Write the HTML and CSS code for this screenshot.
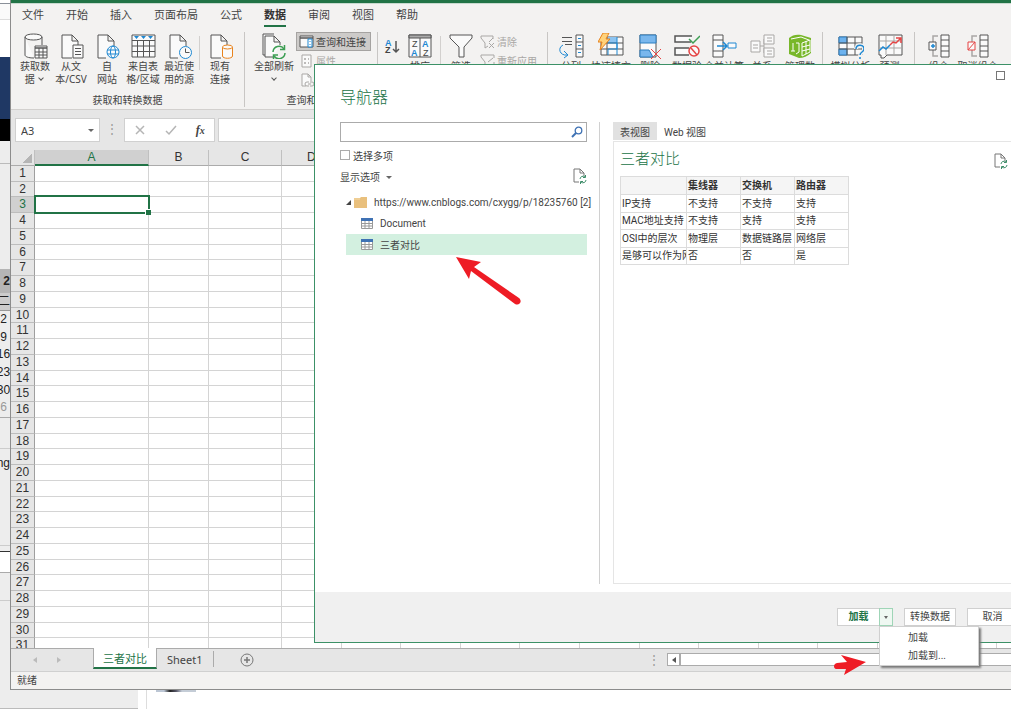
FILE: index.html
```html
<!DOCTYPE html>
<html lang="zh-CN">
<head>
<meta charset="utf-8">
<title>三者对比 - Excel</title>
<link rel="stylesheet" href="styles.css">
</head>
<body>
<div class="desktop">
  <div class="back-side" aria-hidden="true">
    <div class="back-strip">
      <span class="s s-top"></span><span class="s s-bar"></span><span class="s s-white"></span>
      <span class="s s-navy"></span><span class="s s-black"></span><span class="s s-gap"></span><span class="s s-long"></span>
      <span class="s s-month">2</span><span class="s s-week">二</span>
      <span class="s s-days"><i>2</i><i>9</i><i>16</i><i>23</i><i>30</i><i class="dim">6</i></span>
      <span class="s s-foot"></span><span class="s s-ng">ng</span><span class="s s-field"></span><span class="s s-after"></span>
    </div>
  </div>
  <div class="back-page" aria-hidden="true"><span class="back-blur"></span></div>

  <main class="excel">
    <div class="titlebar"></div>
    <nav class="tabs">
      <button>文件</button><button>开始</button><button>插入</button><button>页面布局</button><button>公式</button><button class="on">数据</button><button>审阅</button><button>视图</button><button>帮助</button>
    </nav>
    <div class="ribbon">
      <section class="group">
        <div class="tools">
          <button class="tool"><svg viewBox="0 0 26 26"><path d="M3 4v18c0 1.500 3 3 9 3M20 4v8M3 4c0-4 17-4 17 0s-17 4-17 0" class="k w"/><path d="M13 13h12v12H13z" class="k w"/><path d="M13 15h12" class="k t"/><path d="M13 19h12M13 22h12M17 15v10M21 15v10" class="k"/></svg><span>获取数<br>据 <em class="chev"></em></span></button>
          <button class="tool"><svg viewBox="0 0 26 26"><path d="M14 25H4V2h10l6 6v4M14 2v6h6" class="k w"/><path d="M15 12h10v13H15z" class="k w"/><path d="M17 15.500h6M17 18.500h6M17 21.500h6" class="k"/></svg><span>从文<br>本/CSV</span></button>
          <button class="tool"><svg viewBox="0 0 26 26"><path d="M12 25H4V2h10l6 6v5M14 2v6h6" class="k w"/><circle cx="19" cy="19" r="6" class="b w"/><ellipse cx="19" cy="19" rx="2.500" ry="6" class="b"/><path d="M13 17h12M13 21h12" class="b"/></svg><span>自<br>网站</span></button>
          <button class="tool"><svg viewBox="0 0 26 26"><path d="M2 2h23v22H2z" class="k w"/><path d="M2 7.500h23M2 13h23M2 18.500h23M7.500 7v17M13.500 7v17M19.500 7v17" class="k"/><path d="M4 3h5L6.500 6zM11 3h5l-2.500 3zM18 3h5l-2.500 3z" fill="#1e88d2"/></svg><span>来自表<br>格/区域</span></button>
          <button class="tool"><svg viewBox="0 0 26 26"><path d="M12 25H4V2h10l6 6v5M14 2v6h6" class="k w"/><circle cx="19.500" cy="19.500" r="6" class="b w"/><path d="M19.500 15.500v4h4" class="k"/></svg><span>最近使<br>用的源</span></button>
          <i class="short"></i>
          <button class="tool"><svg viewBox="0 0 26 26"><path d="M14 25H4V2h10l6 6v4M14 2v6h6" class="k w"/><path d="M15.500 14v9c0 3 10 3 10 0v-9" class="o w"/><ellipse cx="20.500" cy="14" rx="5" ry="2" class="o w"/></svg><span>现有<br>连接</span></button>
        </div>
        <div class="caption">获取和转换数据</div>
      </section>
      <section class="group refresh">
        <div class="tools">
          <button class="tool wide"><svg viewBox="0 0 26 26"><path d="M4 22H2V1h11M12 24H4V3h9l6 6v3M13 3v6h6" class="k w"/><path d="M12 19a6 6 0 0 1 11-3M24 20a6 6 0 0 1-11 3" class="g t"/><path d="M23.500 12v4.500H19M12.500 26v-4H17" class="g t"/></svg><span>全部刷新<br><em class="chev"></em></span></button>
          <div class="stack">
            <button class="row on"><svg viewBox="0 0 16 14"><path d="M1 1h13v11H1z" class="k w"/><path d="M1 3h13" class="k t"/><path d="M9 4h4v8H9z" fill="#fff" stroke="#1e88d2"/><path d="M11 6v1M11 9v1" class="b"/></svg>查询和连接</button>
            <button class="row off"><svg viewBox="0 0 16 14"><path d="M3 1h9v12H3z" class="y w"/><path d="M5 5h2M5 9h2M9 5h1M9 9h1" class="y t"/></svg>属性</button>
            <button class="row off"><svg viewBox="0 0 16 14"><path d="M7 13H3V1h6l3 3v4M9 1v3h3" class="y w"/><path d="M10 9H8a2 2 0 0 0 0 4h2M11 9h2a2 2 0 0 1 0 4h-2M9 11h3" class="y"/></svg>编辑链接</button>
          </div>
        </div>
        <div class="caption">查询和连接</div>
      </section>
      <section class="group sort">
        <div class="tools">
          <button class="tool az" aria-label="升序"><svg viewBox="0 0 18 26"><text x="2" y="13" class="ltr lb">A</text><text x="2" y="20" class="ltr">Z</text><path d="M13 8v11M10 16l3 3 3-3" class="k t"/></svg></button>
          <button class="tool"><svg viewBox="0 0 26 26"><path d="M2 2h22v22H2z" class="k w"/><path d="M2 2h22v3H2z" fill="#aaa" stroke="#555"/><path d="M13 5v19" class="k"/><text x="5" y="14" class="ltr n">Z</text><text x="4" y="23" class="ltr lb">A</text><text x="15" y="14" class="ltr lb">A</text><text x="16" y="23" class="ltr n">Z</text></svg><span>排序</span></button>
          <i class="short"></i>
          <button class="tool"><svg viewBox="0 0 26 26"><path d="M2 2h22v3l-8 9v10h-5V14L2 5z" class="k w"/></svg><span>筛选</span></button>
          <div class="stack">
            <button class="row off"><svg viewBox="0 0 16 14"><path d="M13 4V1H1v2l4 5v5l3-2M13 3L9 7" class="y"/><path d="M9 8l5 5M14 8l-5 5" class="y"/></svg>清除</button>
            <button class="row off"><svg viewBox="0 0 16 14"><path d="M14 4V1H1v2l4 5v5l3-2M13 4L8 8" class="y"/><path d="M9 12h5V8" class="y"/></svg>重新应用</button>
          </div>
        </div>
      </section>
      <section class="group data-tools">
        <div class="tools">
          <button class="tool"><svg viewBox="0 0 26 26"><path d="M4 4.500h10M4 8.500h10M7 11.500h7" class="k"/><path d="M18 2h7v22h-7zM18 9h7M18 16h7" class="k w"/><path d="M20 5.500h3M20 12.500h3M20 19.500h3" class="b"/><path d="M5 12c-6 3-3 11 4 10M6 18l4 4-4 3" class="b"/></svg><span>分列</span></button>
          <button class="tool"><svg viewBox="0 0 26 26"><path d="M3 4h22v18H3z" class="k w"/><path d="M9 4h10v6H9z" fill="#8cc3f0"/><path d="M3 10h22M3 16h22M9 4v18" class="k"/><path d="M10 10h9v6h-9v6M19 4v18" class="b"/><path d="M5 0h6L8 6h4L2 17l2-8H0z" fill="#ffd27a" stroke="#e8831d"/></svg><span>快速填充</span></button>
          <button class="tool"><svg viewBox="0 0 26 26"><path d="M3 2h16v22H3z" class="k w"/><path d="M3 2h16v8H3zM3 17h9l4 7H3z" fill="#79b7ed" stroke="#2c7ec0"/><path d="M14 16l10 10M24 16L14 26" class="r"/></svg><span>删除<br>重复值</span></button>
          <button class="tool"><svg viewBox="0 0 26 26"><path d="M18 3H1v6h16M15 15H1v7h14" class="k w t"/><path d="M15 6l4 4 7-7" class="g t"/><circle cx="20" cy="18" r="5" class="r w t"/><path d="M17 15l6 7" class="r t"/></svg><span>数据验<br>证</span></button>
          <button class="tool"><svg viewBox="0 0 26 26"><path d="M2 2h10v22H2zM2 7h10M2 18h10" class="k w"/><path d="M6 13h10M12 9l4 4-4 4" class="b t"/><path d="M17 10h8v5h-8z" class="b w"/></svg><span>合并计算</span></button>
          <button class="tool"><svg viewBox="0 0 26 26"><path d="M11 13h4M15 6v14M15 6h3M15 20h3" class="y"/><path d="M2 8h9v11H2zM15 2h10v9H15zM15 15h10v9H15z" class="y w"/><path d="M4 12h5M4 15h5M18 5h5M18 8h5M18 18h5M18 21h5" class="y"/></svg><span>关系</span></button>
          <button class="tool"><svg viewBox="0 0 26 26"><path d="M2 5c3-3 8-4 12-3l10 3v15c-3 3-8 5-12 5L2 21z" fill="#78b72a"/><path d="M15 10l8-3v12l-8 4zM15 14l8-2M15 18l8-2M19 8v13" fill="none" stroke="#fff"/><path d="M6 10v8M4 18h4M9 10h3v9l-3 2M4 6l10-2 8 3" fill="none" stroke="#fff"/></svg><span>管理数<br>据模型</span></button>
        </div>
      </section>
      <section class="group two">
        <div class="tools">
          <button class="tool"><svg viewBox="0 0 26 26"><path d="M1 4h23v18H1z" class="k w"/><path d="M1 4h8v6H1zM1 16h8v6H1z" fill="#6cb2ee" stroke="#2c7ec0"/><path d="M1 10h23M1 16h23M9 4v18M17 4v18" class="k"/><path d="M18 16c0-5 8-5 8 0 0 3-4 3-4 7M22 24v2" fill="none" stroke="#f3f2f1" stroke-width="4"/><path d="M18 16c0-5 8-5 8 0 0 3-4 3-4 6M22 24v2" class="b t"/></svg><span>模拟分析</span></button>
          <button class="tool"><svg viewBox="0 0 26 26"><path d="M2 2h23v20H10l-3 3H4v-3H2z" class="k w"/><path d="M2 8h23M2 15h23M9 2v20M17 2v20" class="y"/><path d="M2 18l4-4 3 2 4-4" class="b t"/><path d="M13 12l3-3 3 1 5-5M19 5h5v5" class="r t"/></svg><span>预测</span></button>
        </div>
      </section>
      <section class="group last">
        <div class="tools">
          <button class="tool"><svg viewBox="0 0 26 26"><path d="M12 3H7v6M12 23H7v-6" class="y t"/><path d="M15 2h8v22h-8zM15 7h8M15 13h8M15 18h8" class="k w"/><path d="M3 9h7v8H3z" class="k w"/><path d="M5 13h4M7 11v4" class="b t"/></svg><span>组合</span></button>
          <button class="tool"><svg viewBox="0 0 26 26"><path d="M12 3H7v6M12 23H7v-6" class="y t"/><path d="M15 2h8v22h-8zM15 7h8M15 13h8M15 18h8" class="k w"/><path d="M3 9h7v8H3zM3 17l7-8" class="r w"/></svg><span>取消组合</span></button>
          <button class="tool"><svg viewBox="0 0 26 26"><path d="M14 7h8v6h-8zM14 16h8v6h-8zM17 13v3" class="k w"/></svg></button>
        </div>
      </section>
    </div>

    <div class="formula">
      <label class="namebox"><input value="A3" aria-label="名称框"><em class="tri"></em></label>
      <span class="dots">⋮</span>
      <div class="fx">
        <button aria-label="取消"><svg viewBox="0 0 12 12"><path d="M2 2l8 8M10 2l-8 8" class="c t"/></svg></button>
        <button aria-label="输入"><svg viewBox="0 0 12 12"><path d="M1 7l3 3 7-8" class="c t"/></svg></button>
        <button class="fn" aria-label="插入函数">f<small>x</small></button>
      </div>
      <input class="edit" aria-label="编辑栏">
    </div>

    <div class="sheet">
      <table class="grid" id="grid"></table>
    </div>

    <div class="sheetbar">
      <div class="arrows"><button class="al" aria-label="上一个"></button><button class="ar" aria-label="下一个"></button></div>
      <button class="sheettab on">三者对比</button>
      <button class="sheettab">Sheet1</button>
      <i class="tabsep"></i>
      <button class="add" aria-label="新工作表"><svg viewBox="0 0 14 14"><circle cx="7" cy="7" r="6" class="y2"/><path d="M7 4v6M4 7h6" class="y2 t"/></svg></button>
      <span class="dots">⋮</span>
      <button class="scrollbtn" aria-label="向左滚动"><i class="la"></i></button>
      <div class="track"></div>
    </div>
    <footer class="status">就绪</footer>
  </main>

  <section class="dialog" role="dialog" aria-label="导航器">
    <div class="dlg-top"><button class="max" aria-label="最大化"></button></div>
    <h1>导航器</h1>
    <div class="dlg-main">
      <div class="nav">
        <label class="search"><input type="text" aria-label="搜索"><svg viewBox="0 0 12 12"><circle cx="7.500" cy="4.500" r="3.300" fill="none" stroke="#3f72b4" stroke-width="1.300"/><path d="M5 7l-4 4" stroke="#3f72b4" stroke-width="2"/></svg></label>
        <label class="multi"><input type="checkbox">选择多项</label>
        <div class="opts"><button>显示选项 <em class="tri"></em></button><button aria-label="刷新"><svg viewBox="0 0 14 16"><path d="M6 14H1V1h6l4 4v3M7 1v4h4" class="y2"/><path d="M7 11a3 3 0 0 1 5-2M13 12a3 3 0 0 1-5 2M12.500 7v2.500H10M7.500 16v-2.500H10" class="dg"/></svg></button></div>
        <ul class="tree">
          <li class="root"><svg class="twist" viewBox="0 0 5 5"><path d="M5 0v5H0z" fill="#444"/></svg><svg class="folder" viewBox="0 0 14 12"><path d="M0 1h6l1-1h6v11H0z" fill="#e9c07d"/><path d="M0 2h6" stroke="#f5dcae"/></svg><span>https://www.cnblogs.com/cxygg/p/18235760 [2]</span></li>
          <li><svg viewBox="0 0 12 11"><path d="M.5.500h11v10H.5zM.5 5.500h11M.5 8h11M4 3v8M8 3v8" class="y3"/><path d="M0 0h12v3H0z" fill="#3f72b4"/></svg><span>Document</span></li>
          <li class="on"><svg viewBox="0 0 12 11"><path d="M.5.500h11v10H.5zM.5 5.500h11M.5 8h11M4 3v8M8 3v8" class="y3"/><path d="M0 0h12v3H0z" fill="#3f72b4"/></svg><span>三者对比</span></li>
        </ul>
      </div>
      <div class="preview">
        <div class="views"><button class="on">表视图</button><button>Web 视图</button></div>
        <div class="panel">
          <div class="panel-head"><h2>三者对比</h2><button aria-label="刷新预览"><svg viewBox="0 0 14 16"><path d="M6 14H1V1h6l4 4v3M7 1v4h4" class="y2"/><path d="M7 11a3 3 0 0 1 5-2M13 12a3 3 0 0 1-5 2M12.500 7v2.500H10M7.500 16v-2.500H10" class="dg"/></svg></button></div>
          <table class="data">
            <colgroup><col class="c1"><col class="c2"><col class="c2"><col class="c2"></colgroup>
            <tr><th></th><th>集线器</th><th>交换机</th><th>路由器</th></tr>
            <tr><td>IP支持</td><td>不支持</td><td>不支持</td><td>支持</td></tr>
            <tr><td>MAC地址支持</td><td>不支持</td><td>支持</td><td>支持</td></tr>
            <tr><td>OSI中的层次</td><td>物理层</td><td>数据链路层</td><td>网络层</td></tr>
            <tr><td>是够可以作为网</td><td>否</td><td>否</td><td>是</td></tr>
          </table>
        </div>
      </div>
    </div>
    <footer class="actions">
      <div class="split">
        <button class="load">加载</button><button class="drop" aria-label="更多加载选项"><em class="tri"></em></button>
        <div class="menu"><button>加载</button><button>加载到...</button></div>
      </div>
      <button class="btn b1">转换数据</button>
      <button class="btn b2">取消</button>
    </footer>
  </section>

  <svg class="mark m1" viewBox="0 0 66 48" aria-hidden="true"><path d="M0 0l25 5-7 5 45 31c4 4 0 8-4 6L15 14l-2 8z" fill="#ee1c25"/></svg>
  <svg class="mark m2" viewBox="0 0 34 22" aria-hidden="true"><path d="M32 8L7 1l6 7-10 1c-4 1-4 6 0 6h9l-2 6z" fill="#ee1c25"/></svg>
</div>
<script src="grid.js"></script>
</body>
</html>
```
FILE: grid.js
```js
const columns = ["A", "B", "C", "D", "E", "F", "G", "H", "I", "J", "K", "L", "M", "N", "O", "P"];
const grid = document.getElementById("grid");

const cols = document.createElement("colgroup");
["head", "wide", "mid", "large"].forEach(function (name) {
  const col = document.createElement("col");
  col.className = "col-" + name;
  cols.append(col);
});
grid.append(cols);

const head = grid.createTHead().insertRow();
[""].concat(columns).forEach(function (name, i) {
  const th = document.createElement("th");
  th.textContent = name;
  if (i === 0) th.className = "corner";
  if (name === "A") th.className = "picked";
  head.append(th);
});

const body = grid.createTBody();
for (let n = 1; n <= 31; n++) {
  const row = body.insertRow();
  const th = document.createElement("th");
  th.textContent = n;
  if (n === 3) th.className = "picked";
  row.append(th);
  columns.forEach(function (name) {
    const cell = row.insertCell();
    if (n === 3 && name === "A") cell.className = "active";
  });
}
```
FILE: styles.css
```css
* { box-sizing: border-box; }
body, h1, h2, ul { margin: 0; padding: 0; }
body, button, input { font-family: "Noto Sans", "Noto Sans CJK SC", sans-serif; font-size: 10px; color: #444; }
button { border: 0; padding: 0; background: none; white-space: nowrap; }
input { min-width: 0; }
i, em { font-style: normal; }
svg { display: block; flex: none; }
.desktop { position: relative; height: 100vh; overflow: hidden; display: flex; background: #fff; }

/* windows behind */
.back-side { width: 138px; background: #ededed; border-bottom: 1px solid #bbb; }
.back-page { flex: 1; margin-left: 8px; border-left: 1px solid #ddd; display: flex; align-items: flex-end; padding: 0 9px 17px; }
.back-blur { width: 40px; height: 8px; background: linear-gradient(90deg, #bcc6d4 20%, #222 35%, #556 50%, #c4ccd6 65%); }
.back-strip { width: 10px; display: flex; flex-direction: column; overflow: hidden; font: 12px/17px "Liberation Sans", sans-serif; color: #222; }
.s { flex: none; display: flex; align-items: center; justify-content: flex-end; }
.s-top { height: 4px; background: #fff; border-bottom: 1px solid #8a9099; }
.s-bar { height: 16px; background: #fafafa; border-bottom: 1px solid #ddd; }
.s-white { height: 37px; background: #fff; }
.s-navy { height: 62px; background: #1f3864; }
.s-black { height: 22px; background: #000; }
.s-gap { height: 23px; border-bottom: 1px solid #bbb; }
.s-long { height: 105px; }
.s-month { height: 24px; background: #b5b5b5; font-weight: bold; }
.s-week { height: 18px; background: #ccc; border-bottom: 1px solid #999; }
.s-days { height: 107px; flex-direction: column; align-items: center; justify-content: center; border-bottom: 1px solid #aaa; }
.s-days i { height: 18px; padding-right: 3px; }
.s-days .dim { color: #999; }
.s-foot { height: 31px; border-bottom: 1px solid #ccc; }
.s-ng { height: 97px; align-items: flex-start; padding-top: 6px; border-bottom: 1px solid #ccc; }
.s-field { height: 27px; background: #fff; border-top: 5px solid #ededed; border-bottom: 1px solid #aaa; box-shadow: inset 0 1px #333; }
.s-after { height: 28px; border-bottom: 1px solid #ccc; }

/* spreadsheet window */
.excel { position: absolute; left: 10px; right: 0; top: 0; bottom: 19px; display: flex; flex-direction: column; overflow: hidden; background: #e6e6e6; border-left: 1px solid #8c8c8c; border-bottom: 1px solid #8c8c8c; }
.titlebar { flex: none; height: 4px; background: #217346; border-bottom: 1px solid #c8dacf; }
.tabs { flex: none; height: 24px; display: flex; gap: 22px; padding: 0 11px; background: #f3f2f1; }
.tabs button { flex: none; font-size: 11px; line-height: 20px; padding-top: 1px; border-bottom: 2px solid transparent; height: 23px; }
.tabs .on { font-weight: bold; color: #333; border-color: #217346; }
.ribbon { flex: none; height: 82px; display: flex; padding-top: 4px; background: #f3f2f1; border-bottom: 1px solid #d2d0ce; }
.group { flex: none; display: flex; flex-direction: column; justify-content: space-between; height: 75px; padding: 0 6px; border-right: 1px solid #c8c6c4; }
.tools { display: flex; align-items: flex-start; }
.tool { flex: none; width: 36px; display: flex; flex-direction: column; align-items: center; gap: 1px; padding-top: 1px; line-height: 13px; }
.tool svg { width: 26px; height: 26px; }
.tool.wide { width: 44px; }
.short { width: 1px; height: 34px; background: #d2d0ce; margin: 4px 2px; }
.caption { text-align: center; line-height: 14px; }
.refresh { padding: 0 6px 0 7px; }
.refresh .stack { margin-bottom: -4px; }
.stack { display: flex; flex-direction: column; }
.row { display: flex; align-items: center; gap: 1px; height: 19px; padding: 0 4px 0 2px; border: 1px solid transparent; }
.row svg { width: 16px; height: 14px; }
.row.on { background: #cdcbc9; border-color: #a5a3a1; }
.row.off { color: #a9a7a5; }
.tool.az { width: 18px; margin-right: 1px; }
.tool.az svg { width: 18px; }
.sort .short { margin: 4px 2px; }
.sort { padding: 0 0 0 5px; width: 170px; }
.sort .stack .row { padding: 0; }
.data-tools .tool { width: 38px; }
.data-tools .tool:nth-child(-n+2) { width: 40px; }
.data-tools .tool:nth-child(4) { width: 36px; }
.data-tools { width: 275px; padding: 0 3px; }
.two { width: 92px; padding: 0 8px; }
.two .tool, .last .tool { width: 39px; }
.last { padding: 0 4px; border: 0; }
.k, .b, .o, .g, .r, .y, .y2, .y3, .c, .dg { fill: none; stroke-width: 1; }
.k { stroke: #555; } .b { stroke: #1e88d2; } .o { stroke: #e8831d; } .g { stroke: #3c9e53; }
.r { stroke: #e54545; } .y { stroke: #a9a7a5; } .y2 { stroke: #777; } .y3 { stroke: #999; fill: #fff; } .c { stroke: #b5b5b5; } .dg { stroke: #3c8c68; }
.w { fill: #fafafa; }
.t { stroke-width: 1.5; }
.ltr { font: bold 9px "Liberation Sans", sans-serif; fill: #444; }
.ltr.n { font-weight: normal; }
.ltr.lb { fill: #1e88d2; }
.chev { display: inline-block; width: 4px; height: 4px; border: solid #555; border-width: 0 1px 1px 0; transform: rotate(45deg); margin: 0 2px 3px; }
.tri { display: inline-block; border: 3px solid transparent; border-top: 3px solid #666; border-bottom: 0; }

.formula { flex: none; display: flex; gap: 3px; padding: 8px 0 8px 4px; height: 40px; }
.namebox, .fx, .edit { height: 24px; background: #fff; border: 1px solid #d0d0d0; }
.namebox { width: 85px; display: flex; align-items: center; padding-right: 5px; }
.namebox input { flex: 1; border: 0; font-size: 11px; padding: 0 5px; background: none; }
.dots { width: 18px; text-align: center; line-height: 22px; font-size: 12px; color: #999; }
.fx { width: 91px; display: flex; align-items: center; justify-content: space-around; }
.fx svg { width: 12px; height: 12px; }
.fn { font: italic bold 12px "Liberation Serif", serif; }
.fn small { font-size: 10px; }
.edit { flex: 1; }

.sheet { flex: 1; min-height: 0; overflow: hidden; }
.grid { table-layout: fixed; width: 1046px; border-collapse: separate; border-spacing: 0; background: #fff; }
.col-head { width: 24px; } .col-wide { width: 114px; } .col-mid { width: 60px; } .col-large { width: 73px; }
.grid th, .grid td { padding: 0; border-right: 1px solid #d4d4d4; border-bottom: 1px solid #d4d4d4; }
.grid th { font: 12px/15px "Liberation Sans", sans-serif; color: #333; background: #e6e6e6; overflow: hidden; }
.grid thead th { height: 16px; border-bottom: 1px solid #ababab; border-right-color: #c0c0c0; }
.grid tbody th { border-right-color: #9f9f9f; border-bottom-color: #bdbdbd; }
.grid tbody tr { height: 16px; }
.grid tbody tr:nth-child(4n+2) { height: 15px; }
.grid tbody tr:nth-child(4n+2) th { line-height: 14px; }
.grid thead .corner { background: linear-gradient(135deg, transparent 50%, #b5b5b5 50%) no-repeat 11px 3px / 10px 10px #e6e6e6; }
.grid .picked { background: #d0d0d0; color: #217346; }
.grid thead .picked { border-bottom: 2px solid #217346; line-height: 14px; }
.grid .active { position: relative; }
.active::before { content: ""; position: absolute; inset: -2px -2px -2px -1px; border: 2px solid #217346; }
.active::after { content: ""; position: absolute; right: -3px; bottom: -3px; width: 5px; height: 5px; background: #217346; border: solid #fff; border-width: 1px 0 0 1px; }

.sheetbar { flex: none; height: 23px; display: flex; background: #e6e6e6; border-top: 1px solid #ababab; }
.arrows { width: 82px; display: flex; align-items: center; gap: 20px; padding-left: 22px; }
.al, .ar, .la { border: 3px solid transparent; }
.al { border-right: 4px solid #bbb; border-left: 0; }
.ar { border-left: 4px solid #bbb; border-right: 0; }
.sheettab { height: 20px; font-size: 11px; padding: 0 10px; }
.sheettab.on { color: #217346; background: #fff; border-bottom: 2px solid #217346; margin-top: -1px; height: 21px; border-left: 1px solid #ababab; border-right: 1px solid #ababab; padding: 0 9px; }
.tabsep { width: 1px; height: 16px; background: #ababab; margin-top: 2px; }
.add { margin: 0 auto 0 26px; }
.add svg { width: 14px; height: 14px; }
.scrollbtn { flex: none; width: 13px; height: 13px; margin: 4px 0 0 4px; background: #fff; border: 1px solid #ababab; display: flex; align-items: center; justify-content: center; }
.la { border-right: 4px solid #555; border-left: 0; }
.track { flex: none; width: 331px; height: 13px; margin-top: 4px; background: #fff; border: 1px solid #ababab; border-right: 0; }
.status { flex: none; height: 18px; line-height: 17px; padding-left: 6px; background: #f3f2f1; border-top: 1px solid #d0d0d0; }

/* navigator dialog */
.dialog { position: absolute; left: 314px; right: -16px; top: 64px; bottom: 66px; display: flex; flex-direction: column; background: #fff; border: 1px solid #3c9167; }
.dialog, .dialog button { font-family: Roboto, "Noto Sans CJK SC", sans-serif; }
.dlg-top { display: flex; justify-content: flex-end; padding: 6px 21px 0; height: 21px; }
.max { width: 9px; height: 9px; border: 1px solid #777; }
h1, h2 { font-weight: 300; color: #217346; }
h1 { font-size: 16px; line-height: 24px; padding-left: 25px; }
.dlg-main { flex: 1; min-height: 0; display: flex; padding: 12px 0 8px 25px; }
.nav { flex: none; width: 260px; padding-right: 12px; border-right: 1px solid #d0d0d0; }
.search { display: flex; align-items: center; height: 20px; border: 1px solid #ababab; padding-right: 3px; }
.search input { flex: 1; border: 0; height: 16px; }
.search svg { width: 12px; height: 12px; }
.multi { display: flex; align-items: center; gap: 3px; height: 26px; }
.multi input { appearance: none; width: 10px; height: 10px; margin: 0; border: 1px solid #ababab; background: #fff; }
.opts { display: flex; justify-content: space-between; align-items: center; height: 16px; }
.opts .tri { margin: 0 0 2px 4px; }
.opts svg, .panel-head svg { width: 14px; height: 16px; }
.tree { list-style: none; padding: 8px 0 0 6px; }
.tree li { display: flex; align-items: center; height: 21px; padding-left: 15px; }
.tree li svg { width: 12px; height: 11px; margin-right: 7px; }
.tree .root { padding: 0; white-space: nowrap; }
.tree .root .folder { width: 14px; height: 12px; margin: 0 6px 0 3px; }
.tree .root .twist { width: 5px; height: 5px; margin: 0; }
.tree .on { background: #d3f0e0; }
.preview { flex: 1; display: flex; flex-direction: column; padding-left: 13px; }
.views { display: flex; }
.views button { height: 18px; padding: 0 7px; }
.views .on { background: #e1e1e1; }
.panel { flex: 1; margin-top: 1px; border: 1px solid #e5e5e5; padding: 6px 6px; }
.panel-head { display: flex; justify-content: space-between; align-items: center; padding: 1px 11px 0 0; }
.panel-head button { margin-top: 4px; }
h2 { font-size: 15px; line-height: 20px; }
table.data { width: 228px; margin-top: 7px; table-layout: fixed; border-collapse: collapse; }
.c1 { width: 66px; } .c2 { width: 54px; }
.data td, .data th { height: 17px; padding: 0 0 0 1px; line-height: 16px; border: 1px solid #dcdcdc; white-space: nowrap; overflow: hidden; color: #333; text-align: left; }
.data th { background: #f5f5f5; font-weight: bold; height: 18px; }
.data tr:nth-child(even) td { height: 18px; }
.actions { flex: none; height: 50px; display: flex; justify-content: flex-end; align-items: center; gap: 11px; padding-right: 8px; background: #f0f0f0; }
.split { position: relative; display: flex; }
.load, .drop, .btn { height: 18px; background: #fff; border: 1px solid #d0d0d0; line-height: 16px; }
.load { width: 42px; color: #217346; font-weight: bold; border-right: 0; }
.drop { width: 14px; background: #eff8f2; border-color: #9fd5b7; display: flex; align-items: center; justify-content: center; }
.drop .tri { border-width: 3px 2px 0; }
.b1 { width: 52px; } .b2 { width: 51px; }
.menu { position: absolute; top: 18px; left: 42px; width: 100px; padding: 0 0 2px; background: #fff; border: 1px solid #d0d0d0; box-shadow: 2px 2px 2px #777; z-index: 1; }
.menu button { display: block; width: 100%; height: 18px; padding-left: 28px; text-align: left; }

/* red pointer marks */
.mark { position: absolute; }
.m1 { left: 456px; top: 257px; width: 66px; height: 48px; }
.m2 { left: 834px; top: 654px; width: 34px; height: 22px; }
```
